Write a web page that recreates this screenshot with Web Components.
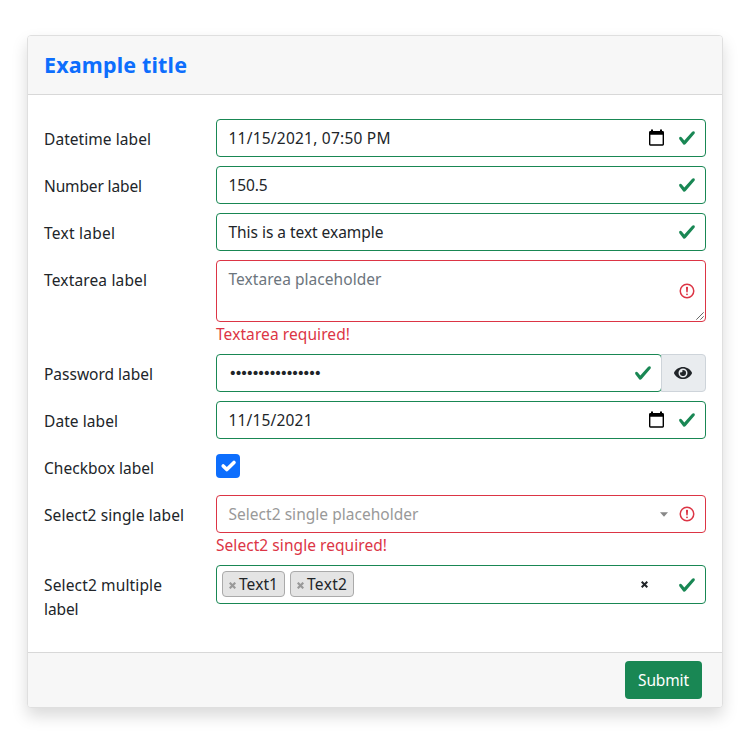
<!DOCTYPE html>
<html lang="en">
<head>
<meta charset="utf-8">
<title>Example title</title>
<style>
html, body { margin: 0; background: #fff; }
body { padding: 35px 30px 39px 27px; width: 696px; font: 15.5px/24px "Noto Sans", "Open Sans", sans-serif; color: #212529; }
</style>
</head>
<body>
<form-card>
  <fit-text slot="title" w="143">Example title</fit-text>
  <form-row label="Datetime label" w="107"><form-field state="valid"><fit-text w="162">11/15/2021, 07:50 PM</fit-text><ui-icon slot="tool" name="calendar"></ui-icon></form-field></form-row>
  <form-row label="Number label" w="98"><form-field state="valid"><fit-text w="39">150.5</fit-text></form-field></form-row>
  <form-row label="Text label" w="71"><form-field state="valid"><fit-text w="155">This is a text example</fit-text></form-field></form-row>
  <form-row label="Textarea label" w="103" error="Textarea required!" ew="134"><form-field state="invalid" class="area" style="--h:62px;--fg:#6c757d"><fit-text w="153">Textarea placeholder</fit-text><ui-icon slot="corner" name="grip"></ui-icon></form-field></form-row>
  <form-row label="Password label" w="109"><password-group><form-field state="valid"><fit-text w="93.5" style="font-family:'DejaVu Sans';font-size:14.5px">••••••••••••••••</fit-text></form-field></password-group></form-row>
  <form-row label="Date label" w="74"><form-field state="valid"><fit-text w="84">11/15/2021</fit-text><ui-icon slot="tool" name="calendar"></ui-icon></form-field></form-row>
  <form-row label="Checkbox label" w="110"><check-box></check-box></form-row>
  <form-row label="Select2 single label" w="140" error="Select2 single required!" ew="171"><form-field state="invalid" style="--fg:#999"><fit-text w="190">Select2 single placeholder</fit-text><ui-icon slot="tool" name="caret"></ui-icon></form-field></form-row>
  <form-row label="Select2 multiple|label" w="118|34.5"><form-field state="valid" style="--h:39px;--pl:5px"><tag-item w="39">Text1</tag-item><tag-item w="40">Text2</tag-item><ui-icon slot="tool" name="clear"></ui-icon></form-field></form-row>
  <fit-text slot="action" w="51">Submit</fit-text>
</form-card>
<script>
// Text with a set advance width, spread evenly over its letters.
class FitText extends HTMLElement {
  constructor() {
    super();
    this.attachShadow({ mode: 'open' }).innerHTML = `<style>:host{display:inline-block;white-space:pre}span{display:inline-block}</style><span><slot></slot></span>`;
  }
  connectedCallback() {
    const span = this.shadowRoot.querySelector('span');
    const w = parseFloat(this.getAttribute('w'));
    const n = this.textContent.length;
    const natural = span.getBoundingClientRect().width;
    if (w && natural) {
      span.style.letterSpacing = ((w - natural) / (n - 1)) + 'px';
      this.style.width = w + 'px';
    }
  }
}

const ICONS = {
  valid: [18, 18, '0 0 8 8', '<path fill="#198754" d="M2.3 6.73.6 4.53c-.4-1.04.46-1.4 1.1-.8l1.1 1.4 3.4-3.8c.6-.63 1.6-.27 1.2.7l-4 4.6c-.43.5-.8.4-1.1.1z"/>'],
  invalid: [18, 18, '0 0 12 12', '<g fill="none" stroke="#dc3545"><circle cx="6" cy="6" r="4.5"/><path stroke-linejoin="round" d="M5.8 3.6h.4L6 6.5z"/></g><circle cx="6" cy="8.2" r=".6" fill="#dc3545"/>'],
  calendar: [15, 19, '0 0 15 19', '<path fill="#000" fill-rule="evenodd" d="M2 .4h2V2h7V.4h2V2h.6Q15 2 15 3.4v11.9q0 1.4-1.4 1.4H1.4Q0 16.7 0 15.3V3.4Q0 2 1.4 2H2zM1.4 5.7v9.5h12.2V5.7z"/>'],
  caret: [8, 5, '0 0 8 5', '<path fill="#888" d="M0 .2h8L4 4.8z"/>'],
  clear: [7, 7, '0 0 7 7', '<path stroke="#212529" stroke-width="2" d="M.7.7l5.6 5.6M6.3.7.7 6.3"/>'],
  remove: [7, 7, '0 0 7 7', '<path stroke="#999" stroke-width="2.2" d="M.7.7l5.6 5.6M6.3.7.7 6.3"/>'],
  grip: [8, 8, '0 0 8 8', '<path stroke="#555" stroke-width=".9" d="M.3 7.7 7.7.3M4.3 7.7l3.4-3.4"/>'],
  eye: [18, 16, '0 0 576 512', '<path fill="#212529" d="M572.52 241.4C518.29 135.59 410.93 64 288 64S57.68 135.64 3.48 241.41a32.35 32.35 0 0 0 0 29.19C57.71 376.41 165.07 448 288 448s230.32-71.64 284.52-177.41a32.35 32.35 0 0 0 0-29.19zM288 400a144 144 0 1 1 144-144 143.93 143.93 0 0 1-144 144zm0-240a95.31 95.31 0 0 0-25.31 3.79 47.85 47.85 0 0 1-66.9 66.9A95.78 95.78 0 1 0 288 160z"/>'],
  tick: [24, 24, '0 0 20 20', '<path fill="none" stroke="#fff" stroke-linecap="round" stroke-linejoin="round" stroke-width="3" d="m6 10 3 3 6-6"/>']
};
class UiIcon extends HTMLElement {
  connectedCallback() {
    const [w, h, box, body] = ICONS[this.getAttribute('name')];
    if (!this.shadowRoot) this.attachShadow({ mode: 'open' });
    this.shadowRoot.innerHTML = `<style>:host{display:block;flex:none;width:${w}px;height:${h}px}svg{display:block}</style><svg width="${w}" height="${h}" viewBox="${box}">${body}</svg>`;
  }
}

class FormCard extends HTMLElement {
  constructor() {
    super();
    this.attachShadow({ mode: 'open' }).innerHTML = `<style>
      :host{display:flex;flex-direction:column;box-sizing:border-box;height:673px;border:1px solid #dfdfdf;border-radius:4px;background:#fff;box-shadow:0 8px 16px rgba(0,0,0,.15)}
      header{box-sizing:border-box;height:59px;padding:17px 16px;background:#f7f7f7;border-bottom:1px solid #d8d8d8;border-radius:3px 3px 0 0;color:#0d6efd;font-size:21.5px;font-weight:700;line-height:24px}
      main{flex:1;padding:24px 16px 0;display:grid;align-content:start;grid-template-rows:47px 47px 47px 94px 47px 47px 47px 70px 48px}
      footer{box-sizing:border-box;height:55px;padding:8px 20px;background:#f7f7f7;border-top:1px solid #d8d8d8;border-radius:0 0 3px 3px;display:flex;justify-content:flex-end}
      button{font:inherit;color:#fff;background:#198754;border:0;border-radius:4px;height:38px;width:77px;padding:0}
    </style><header><slot name="title"></slot></header><main><slot></slot></main><footer><button><slot name="action"></slot></button></footer>`;
  }
}

class FormRow extends HTMLElement {
  connectedCallback() {
    const widths = this.getAttribute('w').split('|');
    const label = this.getAttribute('label').split('|').map((t, i) => `<fit-text w="${widths[i]}">${t}</fit-text>`).join(' ');
    const error = this.getAttribute('error');
    this.attachShadow({ mode: 'open' }).innerHTML = `<style>
      :host{display:grid;grid-template-columns:148px 490px;column-gap:24px;align-items:start}
      label{padding-top:8px;display:flex;flex-direction:column}
      .error{color:#dc3545;height:24px}
    </style><label>${label}</label><div><slot></slot>${error ? `<div class="error"><fit-text w="${this.getAttribute('ew')}">${error}</fit-text></div>` : ''}</div>`;
  }
}

class FormField extends HTMLElement {
  connectedCallback() {
    const state = this.getAttribute('state');
    this.attachShadow({ mode: 'open' }).innerHTML = `<style>
      :host{position:relative;display:flex;align-items:center;box-sizing:border-box;height:var(--h,38px);border:1px solid ${state === 'valid' ? '#198754' : '#dc3545'};border-radius:4px;padding:0 9px 0 var(--pl,11.5px);background:#fff;color:var(--fg,#212529)}
      :host(.area) .value{align-self:flex-start;padding-top:6px}
      .value{flex:1;display:flex;gap:5px}
      .tool{width:20px;margin-right:11px;display:flex;justify-content:center}
      .corner{position:absolute;right:1px;bottom:1px}
    </style><div class="value"><slot></slot></div><div class="tool"><slot name="tool"></slot></div><ui-icon name="${state}"></ui-icon><div class="corner"><slot name="corner"></slot></div>`;
    const tool = this.querySelector('[slot=tool]');
    const shift = { calendar: 14, caret: 10, clear: 30 }[tool && tool.getAttribute('name')];
    if (shift) {
      const box = this.shadowRoot.querySelector('.tool');
      box.style.width = 'auto';
      box.style.marginRight = shift + 'px';
    }
  }
}

class PasswordGroup extends HTMLElement {
  constructor() {
    super();
    this.attachShadow({ mode: 'open' }).innerHTML = `<style>
      :host{display:flex}
      ::slotted(form-field){width:446px}
      .toggle{box-sizing:border-box;width:45px;height:38px;margin-left:-1px;padding-right:1px;display:grid;place-items:center;background:#e9ecef;border:1px solid #ced4da;border-radius:0 4px 4px 0;position:relative}
    </style><slot></slot><div class="toggle"><ui-icon name="eye"></ui-icon></div>`;
  }
}

class CheckBox extends HTMLElement {
  constructor() {
    super();
    this.attachShadow({ mode: 'open' }).innerHTML = `<style>:host{display:block;width:24px;height:24px;margin-top:6px;background:#0d6efd;border-radius:4px}</style><ui-icon name="tick"></ui-icon>`;
  }
}

class TagItem extends HTMLElement {
  connectedCallback() {
    const text = this.textContent;
    this.attachShadow({ mode: 'open' }).innerHTML = `<style>
      :host{display:flex;align-items:center;gap:3px;box-sizing:border-box;height:26px;padding:0 6px;border:1px solid #aaa;border-radius:4px;background:#e4e4e4;margin-top:-1px}
      ui-icon{margin-top:2px}
    </style><ui-icon name="remove"></ui-icon><fit-text w="${this.getAttribute('w')}">${text}</fit-text>`;
  }
}

customElements.define('fit-text', FitText);
customElements.define('ui-icon', UiIcon);
customElements.define('form-card', FormCard);
customElements.define('form-row', FormRow);
customElements.define('form-field', FormField);
customElements.define('password-group', PasswordGroup);
customElements.define('check-box', CheckBox);
customElements.define('tag-item', TagItem);
// Header and button fonts apply once their containers exist, so spacing is measured again.
document.querySelectorAll('form-card > fit-text').forEach(el => {
  el.shadowRoot.querySelector('span').style.letterSpacing = '';
  el.connectedCallback();
});
</script>
</body>
</html>
